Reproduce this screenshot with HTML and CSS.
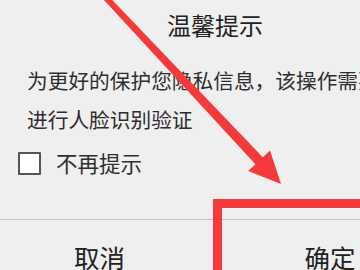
FILE: index.html
```html
<!DOCTYPE html>
<html lang="zh-CN">
<head>
<meta charset="utf-8">
<title>温馨提示</title>
<link rel="stylesheet" href="styles.css">
</head>
<body>
<div class="screen">
  <div class="dialog">
    <div class="title">温馨提示</div>
    <div class="message">为更好的保护您隐私信息，该操作需要<br>进行人脸识别验证</div>
    <label class="remember">
      <span class="box"></span>
      <span class="remember-text">不再提示</span>
    </label>
    <div class="actions">
      <div class="btn cancel">取消</div>
      <div class="btn confirm">确定</div>
    </div>
  </div>
  <svg class="annotation" width="360" height="270" viewBox="0 0 360 270">
    <polygon fill="#f43a3a" points="108.2,-4.2 262.8,157.2 270,150.4 281,184 248.2,171 255.4,164.2 103.8,-0.2"/>
    <rect x="217.5" y="203.5" width="200" height="120" fill="none" stroke="#f43a3a" stroke-width="9"/>
  </svg>
</div>
</body>
</html>
```

FILE: styles.css
```css
html, body {
  margin: 0;
  padding: 0;
}

body {
  background: #efefef;
  font-family: "Noto Sans CJK SC", "Noto Sans", sans-serif;
  color: #2a2a2a;
}

.screen {
  position: relative;
  width: 360px;
  height: 270px;
  overflow: hidden;
}

.dialog {
  width: 460px;
  margin-left: -15px;
  display: flex;
  flex-direction: column;
}

.title {
  margin-top: 13px;
  font-size: 24px;
  line-height: 24px;
  text-align: center;
  color: #222;
}

.message {
  margin-top: 24px;
  padding-left: 42px;
  font-size: 20.7px;
  line-height: 39px;
  white-space: nowrap;
  color: #2e2e2e;
}

.remember {
  margin-top: 12px;
  padding-left: 33px;
  display: flex;
  align-items: center;
  gap: 15px;
  height: 24px;
}

.box {
  width: 19px;
  height: 19px;
  border: 2px solid #555;
  background: #fff;
  border-radius: 1px;
}

.remember-text {
  font-size: 21.5px;
  line-height: 24px;
  color: #2e2e2e;
}

.actions {
  margin-top: 44px;
  border-top: 1px solid #c4c4c4;
  display: grid;
  grid-template-columns: 1fr 1fr;
}

.btn {
  padding-top: 24px;
  height: 60px;
  font-size: 25.5px;
  line-height: 26px;
  text-align: center;
  color: #222;
}

.cancel {
  border-right: 1px solid #c4c4c4;
}

.annotation {
  position: absolute;
  left: 0;
  top: 0;
}
```
